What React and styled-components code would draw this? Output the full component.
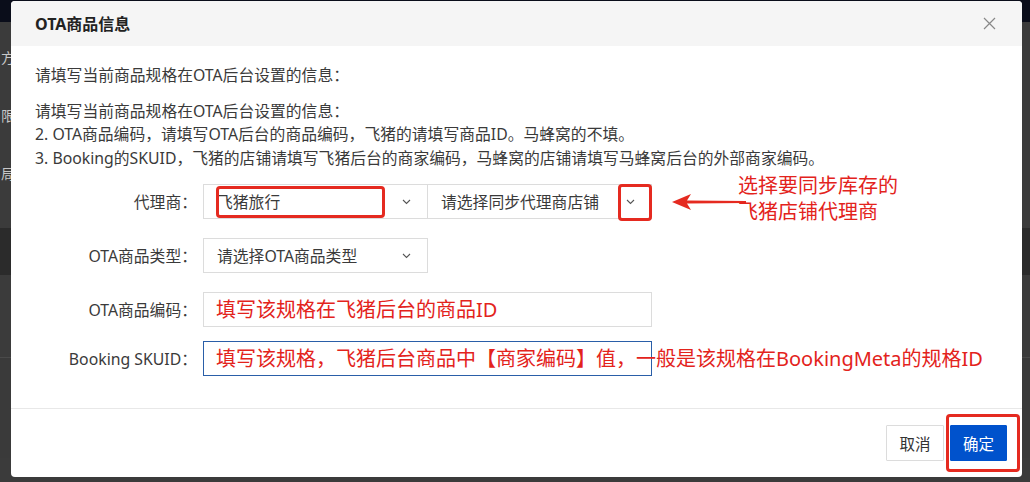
import React from "react";
import styled, { createGlobalStyle } from "styled-components";

const Global = createGlobalStyle`
  html, body { margin: 0; padding: 0; }
  body {
    width: 1030px; height: 482px; overflow: hidden;
    background: #3b3b3b;
    font-family: "Noto Sans", "Noto Sans CJK SC", sans-serif;
  }
`;

const Page = styled.div`
  position: relative;
  width: 1030px;
  height: 482px;
  overflow: hidden;
  background: #3b3b3b;
  display: flex;
  flex-direction: column;
`;

const TopBar = styled.div`
  height: 22px;
  background: #0a0d1a;
  flex: none;
`;

const SideList = styled.div`
  display: flex;
  flex-direction: column;
  flex: 1;
`;

const SideItem = styled.div`
  height: ${(p) => p.$h}px;
  background: ${(p) => p.$bg || "transparent"};
  border-bottom: ${(p) => (p.$line ? "1px solid #4a4a4a" : "none")};
  color: #c8c8c8;
  font-size: 14px;
  line-height: ${(p) => p.$h}px;
  padding-left: 1px;
  white-space: nowrap;
`;

const Modal = styled.div`
  position: absolute;
  left: 11px;
  top: 1px;
  width: 1011px;
  height: 476px;
  background: #fff;
  border-radius: 4px;
  display: flex;
  flex-direction: column;
`;

const Header = styled.div`
  height: 45px;
  flex: none;
  background: #f5f5f5;
  border-radius: 4px 4px 0 0;
  display: flex;
  align-items: center;
  justify-content: space-between;
  padding: 0 26px 0 24px;
`;

const Title = styled.div`
  font-size: 16px;
  font-weight: 700;
  color: #222;
  line-height: 20px;
`;

const CloseBtn = styled.div`
  width: 14px;
  height: 14px;
  display: flex;
  align-items: center;
  justify-content: center;
`;

const Body = styled.div`
  flex: 1;
  padding: 18px 24px 0 24px;
  border-bottom: 1px solid #e8e8e8;
  color: #3a3a3a;
  font-size: 15.8px;
`;

const Para = styled.p`
  margin: 0 0 ${(p) => p.$mb || 0}px 0;
  line-height: 23.5px;
  white-space: nowrap;
`;

const Form = styled.div`
  margin-top: 14px;
  display: grid;
  grid-template-columns: 162px auto;
  column-gap: 6px;
  align-items: center;
`;

const Label = styled.div`
  text-align: right;
  color: #3a3a3a;
  font-size: 15.8px;
  line-height: 20px;
  white-space: nowrap;
  margin-top: ${(p) => p.$mt || 0}px;
`;

const Controls = styled.div`
  display: flex;
  position: relative;
  margin-top: ${(p) => p.$mt || 0}px;
`;

const Select = styled.div`
  position: relative;
  box-sizing: border-box;
  width: ${(p) => p.$w}px;
  height: 35px;
  border: 1px solid #dcdcdc;
  margin-left: ${(p) => (p.$joined ? "-1px" : "0")};
  display: flex;
  align-items: center;
  justify-content: space-between;
  padding: 0 16px 0 13px;
  color: #3a3a3a;
  font-size: 15.8px;
  white-space: nowrap;
  background: #fff;
`;

const Input = styled.div`
  position: relative;
  box-sizing: border-box;
  width: 449px;
  height: 35px;
  border: 1px solid ${(p) => (p.$focus ? "#2a5ea8" : "#dcdcdc")};
  display: flex;
  align-items: center;
  padding-left: 12px;
  background: #fff;
`;

const AnnoText = styled.span`
  color: #e3231c;
  font-size: 20px;
  line-height: 26px;
  white-space: nowrap;
  position: relative;
  z-index: 2;
`;

const RedBox = styled.div`
  position: absolute;
  left: ${(p) => p.$x}px;
  top: ${(p) => p.$y}px;
  width: ${(p) => p.$w}px;
  height: ${(p) => p.$h}px;
  box-sizing: border-box;
  border: 3px solid #e52a20;
  border-radius: 4px;
  pointer-events: none;
  z-index: 3;
`;

const Callout = styled.div`
  position: absolute;
  left: 727px;
  top: 172px;
  color: #e3231c;
  font-size: 20px;
  line-height: 26px;
  white-space: nowrap;
`;

const Arrow = styled.svg`
  position: absolute;
  left: 658px;
  top: 191px;
`;

const Footer = styled.div`
  height: 68px;
  flex: none;
  display: flex;
  justify-content: flex-end;
  align-items: center;
  gap: 6px;
  padding-right: 15px;
`;

const Button = styled.button`
  box-sizing: border-box;
  height: 36px;
  width: ${(p) => p.$w}px;
  padding: 0;
  border: 1px solid ${(p) => (p.$primary ? "#0052cc" : "#dcdcdc")};
  background: ${(p) => (p.$primary ? "#0052cc" : "#fff")};
  color: ${(p) => (p.$primary ? "#fff" : "#333")};
  font-family: "Noto Sans", "Noto Sans CJK SC", sans-serif;
  font-size: 15.5px;
  border-radius: 1px;
`;

const Chevron = () => (
  <svg width="9" height="6" viewBox="0 0 9 6">
    <polyline points="1,1 4.5,4.5 8,1" fill="none" stroke="#555" strokeWidth="1.1" />
  </svg>
);

export default function App() {
  return (
    <>
      <Global />
      <Page>
        <TopBar />
        <SideList>
          <SideItem $h={22} />
          <SideItem $h={28}>方</SideItem>
          <SideItem $h={30} />
          <SideItem $h={28}>限</SideItem>
          <SideItem $h={30} />
          <SideItem $h={28}>局</SideItem>
          <SideItem $h={40} />
          <SideItem $h={47} $bg="#2b2b2b" />
          <SideItem $h={82} $line />
          <SideItem $h={100} $bg="#3a3a3a" />
        </SideList>
        <Modal>
          <Header>
            <Title>OTA商品信息</Title>
            <CloseBtn>
              <svg width="13" height="13" viewBox="0 0 13 13">
                <path d="M1 1 L12 12 M12 1 L1 12" stroke="#888" strokeWidth="1.2" />
              </svg>
            </CloseBtn>
          </Header>
          <Body>
            <Para $mb={12}>请填写当前商品规格在OTA后台设置的信息：</Para>
            <Para>请填写当前商品规格在OTA后台设置的信息：</Para>
            <Para>2. OTA商品编码，请填写OTA后台的商品编码，飞猪的请填写商品ID。马蜂窝的不填。</Para>
            <Para>3. Booking的SKUID，飞猪的店铺请填写飞猪后台的商家编码，马蜂窝的店铺请填写马蜂窝后台的外部商家编码。</Para>
            <Form>
              <Label>代理商：</Label>
              <Controls>
                <Select $w={225}>
                  <span>飞猪旅行</span>
                  <Chevron />
                </Select>
                <Select $w={225} $joined>
                  <span>请选择同步代理商店铺</span>
                  <Chevron />
                </Select>
              </Controls>
              <Label $mt={19}>OTA商品类型：</Label>
              <Controls $mt={19}>
                <Select $w={225}>
                  <span>请选择OTA商品类型</span>
                  <Chevron />
                </Select>
              </Controls>
              <Label $mt={19}>OTA商品编码：</Label>
              <Controls $mt={19}>
                <Input>
                  <AnnoText>填写该规格在飞猪后台的商品ID</AnnoText>
                </Input>
              </Controls>
              <Label $mt={14}>Booking SKUID：</Label>
              <Controls $mt={14}>
                <Input $focus>
                  <AnnoText>填写该规格，飞猪后台商品中【商家编码】值，一般是该规格在BookingMeta的规格ID</AnnoText>
                </Input>
              </Controls>
            </Form>
          </Body>
          <Footer>
            <Button $w={58}>取消</Button>
            <Button $w={57} $primary>确定</Button>
          </Footer>
          <RedBox $x={205} $y={185} $w={169} $h={32} />
          <RedBox $x={607} $y={183} $w={34} $h={37} />
          <RedBox $x={935} $y={413} $w={74} $h={58} />
          <Arrow width="80" height="20" viewBox="0 0 80 20">
            <polygon points="3,10 22,2 18,8.5 77,9 77,11 18,11.5 22,18" fill="#e52a20" />
          </Arrow>
          <Callout>
            选择要同步库存的
            <br />
            飞猪店铺代理商
          </Callout>
        </Modal>
      </Page>
    </>
  );
}
